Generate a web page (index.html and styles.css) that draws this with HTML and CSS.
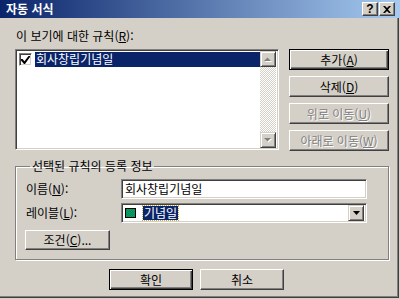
FILE: index.html
```html
<!DOCTYPE html>
<html lang="ko">
  <head>
    <meta charset="UTF-8" />
    <title>자동 서식</title>
    <link rel="stylesheet" href="styles.css">
  </head>
  <body>
    <div class="window">
      <div class="titlebar">
        <span class="title">자동 서식</span>
        <div class="capBtns">
          <span class="capBtn help">?</span>
          <span class="capBtn">
            <svg width="8" height="7" viewBox="0 0 8 7"><path d="M0 0h2l2 2 2-2h2L5 3.5 8 7H6L4 5 2 7H0l3-3.5z" fill="#000"/></svg>
          </span>
        </div>
      </div>
      <div class="content">
        <div class="rulesLabel">이 보기에 대한 규칙(<u>R</u>):</div>
        <div class="rulesRow">
          <div class="listbox">
            <div class="listItems">
              <div class="item">
                <span class="check">
                  <svg width="9" height="8" viewBox="0 0 9 8"><path d="M0 3h1.5l2 2.2L7.5 0H9v1L4 8H3L0 4.5z" fill="#000"/></svg>
                </span>
                <span class="itemText">회사창립기념일</span>
              </div>
            </div>
            <div class="scrollbar">
              <span class="sbBtn">
                <svg width="8" height="5" viewBox="0 0 8 5"><path d="M1 5L4.5 1.5 8 5z" fill="#fff"/><path d="M0 4L3.5 0.5 7 4z" fill="#808080"/></svg>
              </span>
              <span class="sbTrack"></span>
              <span class="sbBtn">
                <svg width="8" height="5" viewBox="0 0 8 5"><path d="M1 1h7L4.5 4.5z" fill="#fff"/><path d="M0 0h7L3.5 3.5z" fill="#808080"/></svg>
              </span>
            </div>
          </div>
          <div class="sideBtns">
            <button class="btn default">추가(<u>A</u>)</button>
            <button class="btn">삭제(<u>D</u>)</button>
            <button class="btn disabled">위로 이동(<u>U</u>)</button>
            <button class="btn disabled">아래로 이동(<u>W</u>)</button>
          </div>
        </div>
        <fieldset class="group">
          <legend>선택된 규칙의 등록 정보</legend>
          <div class="fieldRow">
            <label>이름(<u>N</u>):</label>
            <div class="textbox">회사창립기념일</div>
          </div>
          <div class="fieldRow">
            <label>레이블(<u>L</u>):</label>
            <div class="combo">
              <span class="swatch"></span>
              <span class="comboText">기념일</span>
              <span class="dropBtn">
                <svg width="7" height="4" viewBox="0 0 7 4"><path d="M0 0h7L3.5 4z" fill="#000"/></svg>
              </span>
            </div>
          </div>
          <div class="condRow">
            <button class="btn cond">조건(<u>C</u>)...</button>
          </div>
        </fieldset>
        <div class="dialogBtns">
          <button class="btn default wide">확인</button>
          <button class="btn wide">취소</button>
        </div>
      </div>
    </div>
  </body>
</html>
```
FILE: styles.css
```css
* {
  margin: 0;
  padding: 0;
  box-sizing: border-box;
}
body {
  font-family: "Noto Sans CJK KR", "Liberation Sans", sans-serif;
  font-size: 12px;
  line-height: 14px;
  color: #000;
  background: #d4d0c8;
}
u {
  text-decoration: underline;
  text-underline-offset: 1px;
}
.window {
  width: 400px;
  height: 299px;
  background: #d4d0c8;
  box-shadow: inset -1px -1px #d4d0c8, inset -2px -2px #404040, inset -3px -3px #808080;
  overflow: hidden;
}
.titlebar {
  height: 18px;
  display: flex;
  align-items: center;
  justify-content: space-between;
  padding-left: 6px;
  padding-right: 5px;
  background: linear-gradient(to right, #0a246a, #a6caf0);
}
.title {
  color: #fff;
  font-weight: bold;
  font-size: 12px;
}
.capBtns {
  display: flex;
  gap: 1px;
}
.capBtn {
  width: 16px;
  height: 14px;
  display: flex;
  align-items: center;
  justify-content: center;
  background: #d4d0c8;
  border: 1px solid;
  border-color: #fff #404040 #404040 #fff;
  box-shadow: inset -1px -1px #808080;
}
.capBtn.help {
  font-family: "Liberation Sans", sans-serif;
  font-weight: bold;
  font-size: 12px;
  line-height: 12px;
}
.content {
  padding: 11px 0 0 15px;
}
.rulesLabel {
  margin-left: 1px;
  height: 14px;
}
.rulesRow {
  display: flex;
  gap: 10px;
  margin-top: 6px;
}
.listbox {
  width: 264px;
  height: 101px;
  display: flex;
  background: #fff;
  border: 1px solid;
  border-color: #808080 #fff #fff #808080;
  box-shadow: inset 1px 1px #404040, inset -1px -1px #d4d0c8;
  padding: 2px;
}
.listItems {
  flex: 1;
}
.item {
  display: flex;
  align-items: center;
  height: 15px;
}
.check {
  width: 13px;
  height: 13px;
  margin-left: 1px;
  display: flex;
  align-items: center;
  justify-content: center;
  background: #fff;
  border: 1px solid;
  border-color: #808080 #fff #fff #808080;
  box-shadow: inset 1px 1px #404040, inset -1px -1px #d4d0c8;
}
.itemText {
  flex: 1;
  margin-left: 3px;
  height: 15px;
  padding-left: 1px;
  background: #0a246a;
  color: #fff;
}
.scrollbar {
  width: 16px;
  display: flex;
  flex-direction: column;
  margin: -1px 0;
}
.sbBtn {
  height: 16px;
  display: flex;
  align-items: center;
  justify-content: center;
  background: #d4d0c8;
  border: 1px solid;
  border-color: #d4d0c8 #404040 #404040 #d4d0c8;
  box-shadow: inset 1px 1px #fff, inset -1px -1px #808080;
}
.sbTrack {
  flex: 1;
  background-image: conic-gradient(#fff 25%, #d4d0c8 0 50%, #fff 0 75%, #d4d0c8 0);
  background-size: 2px 2px;
}
.sideBtns {
  display: flex;
  flex-direction: column;
  gap: 6px;
}
.btn {
  width: 100px;
  height: 21px;
  font-family: inherit;
  font-size: 12px;
  line-height: 14px;
  color: #000;
  background: #d4d0c8;
  border: 1px solid;
  border-color: #fff #404040 #404040 #fff;
  box-shadow: inset -1px -1px #808080;
}
.btn.default {
  border-color: #000;
  box-shadow: inset 1px 1px #fff, inset -1px -1px #404040, inset -2px -2px #808080;
}
.btn.disabled {
  color: #808080;
  text-shadow: 1px 1px #fff;
}
.group {
  display: block;
  width: 374px;
  margin-top: 8px;
  border: 1px solid #808080;
  box-shadow: 1px 1px #fff, inset 1px 1px #fff;
  padding: 6px 0 9px 9px;
}
.group legend {
  margin-left: 5px;
  padding: 0 2px;
}
.fieldRow {
  display: flex;
  align-items: center;
  height: 20px;
  margin-bottom: 4px;
}
.fieldRow label {
  width: 95px;
  margin-left: 1px;
}
.textbox,
.combo {
  width: 246px;
  height: 20px;
  background: #fff;
  border: 1px solid;
  border-color: #808080 #fff #fff #808080;
  box-shadow: inset 1px 1px #404040, inset -1px -1px #d4d0c8;
  padding: 2px 3px;
}
.combo {
  display: flex;
  align-items: center;
  padding: 2px 2px 2px 3px;
}
.swatch {
  width: 11px;
  height: 10px;
  border: 1px solid #000;
  background-image: conic-gradient(#00a070 25%, #108850 0 50%, #00a070 0 75%, #108850 0);
  background-size: 2px 2px;
}
.comboText {
  margin-left: 7px;
  padding: 0 1px;
  height: 14px;
  background: #0a246a;
  color: #fff;
  outline: 1px dotted #c0b040;
}
.dropBtn {
  margin-left: auto;
  width: 16px;
  height: 16px;
  display: flex;
  align-items: center;
  justify-content: center;
  background: #d4d0c8;
  border: 1px solid;
  border-color: #d4d0c8 #404040 #404040 #d4d0c8;
  box-shadow: inset 1px 1px #fff, inset -1px -1px #808080;
}
.condRow {
  display: flex;
  padding-top: 3px;
}
.btn.cond {
  width: 85px;
  height: 20px;
}
.dialogBtns {
  display: flex;
  gap: 7px;
  margin-top: 9px;
  padding-left: 94px;
}
.btn.wide {
  width: 84px;
}
```
